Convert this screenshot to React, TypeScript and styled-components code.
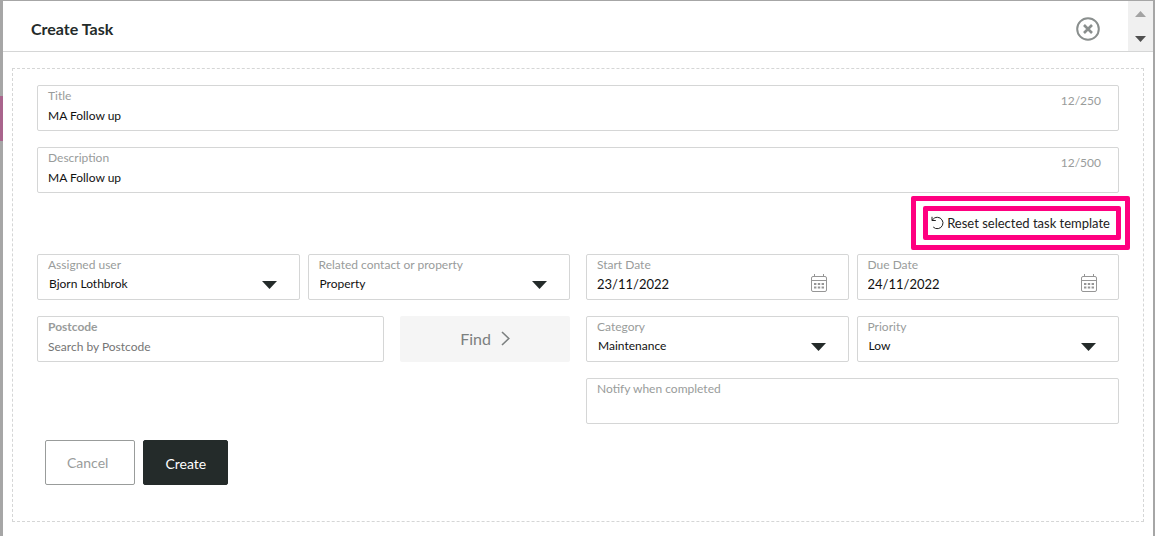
import React from "react";
import styled, { createGlobalStyle, css } from "styled-components";

const ink = "#242b2a";
const muted = "#999c9b";
const line = "#d5d6d6";
const pink = "#ff0080";

const GlobalStyle = createGlobalStyle`
  *, *::before, *::after { box-sizing: border-box; }
  body { margin: 0; background: #a6a6a6; }
  body, button, input, select { font-family: Lato, "Liberation Sans", sans-serif; }
`;

const Backdrop = styled.div`
  display: flex;
  min-height: 100vh;
  padding-top: 1px;
`;

const Rail = styled.div<{ $width: number }>`
  flex: 0 0 ${(p) => p.$width}px;
  padding-top: 95px;
`;

const RailMarker = styled.div`
  height: 45px;
  background: #a9648c;
`;

const Dialog = styled.section`
  flex: 1;
  min-width: 0;
  background: #fff;
`;

const Header = styled.header`
  display: flex;
  align-items: center;
  height: 51px;
  padding-left: 28px;
  border-bottom: 1px solid ${line};
`;

const Heading = styled.h1`
  flex: 1;
  margin: 0;
  padding-top: 6px;
  font-size: 16px;
  line-height: 20px;
  font-weight: 700;
  color: ${ink};
`;

const CloseButton = styled.button`
  width: 24px;
  height: 24px;
  margin: 6px 28px 0 0;
  padding: 0;
  border: 0;
  background: none;
  svg { display: block; }
`;

const Scroller = styled.div`
  display: flex;
  flex-direction: column;
  align-self: stretch;
  width: 25px;
  background: #f0f0f0;
`;

const ScrollButton = styled.button`
  flex: 1;
  display: flex;
  align-items: center;
  justify-content: center;
  padding: 0;
  border: 0;
  background: none;
`;

const Form = styled.form`
  display: flex;
  flex-direction: column;
  margin: 16px 9px 14px;
  padding: 16px 24px 36px;
  border: 1px dashed ${line};
`;

const Stack = styled.div`
  display: flex;
  flex-direction: column;
  gap: 16px;
`;

const Halves = styled.div`
  display: grid;
  grid-template-columns: repeat(2, minmax(0, 1fr));
  align-items: start;
  gap: 16px;
`;

const Pair = styled.div`
  display: grid;
  grid-template-columns: repeat(2, minmax(0, 1fr));
  gap: 8px;
`;

const SearchRow = styled.div`
  display: grid;
  grid-template-columns: minmax(0, 1fr) 170px;
  gap: 16px;
`;

const FieldBox = styled.div`
  position: relative;
  display: flex;
  flex-direction: column;
  height: 46px;
  padding: 2px 10px 0;
  border: 1px solid ${line};
  border-radius: 2px;
`;

const Label = styled.label<{ $bold?: boolean }>`
  font-size: 12px;
  line-height: 16px;
  font-weight: ${(p) => (p.$bold ? 700 : 400)};
  color: ${muted};
`;

const control = css`
  display: block;
  width: 100%;
  margin: 0;
  border: 0;
  outline: 0;
  background: none;
  color: #111;
  appearance: none;
`;

const Input = styled.input<{ $large?: boolean }>`
  ${control}
  height: 22px;
  padding: 0;
  font-size: ${(p) => (p.$large ? 13 : 12)}px;
  &::placeholder { color: #757575; opacity: 1; }
`;

const Select = styled.select`
  ${control}
  height: 20px;
  padding: 0 0 0 1px;
  font-size: 12px;
`;

const Count = styled.span`
  position: absolute;
  top: 7px;
  right: 17px;
  font-size: 12px;
  line-height: 16px;
  color: ${muted};
`;

const Caret = styled.svg`
  position: absolute;
  top: 26px;
  right: 22px;
  pointer-events: none;
`;

const CalendarButton = styled.button`
  position: absolute;
  top: 19px;
  right: 21px;
  padding: 0;
  border: 0;
  background: none;
  svg { display: block; }
`;

const ResetRow = styled.div`
  display: flex;
  align-items: center;
  justify-content: flex-end;
  height: 61px;
  padding: 0 9px 2px 0;
`;

const ResetButton = styled.button`
  position: relative;
  display: flex;
  align-items: center;
  gap: 3px;
  height: 20px;
  padding: 0;
  border: 0;
  background: none;
  font-size: 13px;
  line-height: 20px;
  color: #222;
  &::before, &::after {
    content: "";
    position: absolute;
    border: 5px solid ${pink};
    border-radius: 2px;
    pointer-events: none;
  }
  &::before { inset: -7px -11px -7px -8px; }
  &::after { inset: -17px -20px; }
`;

const FindButton = styled.button`
  display: flex;
  align-items: center;
  justify-content: center;
  gap: 10px;
  height: 46px;
  padding: 0 0 2px;
  border: 0;
  border-radius: 2px;
  background: #f5f5f5;
  font-size: 16px;
  color: #7c8080;
`;

const Actions = styled.div`
  display: flex;
  gap: 8px;
  margin: 16px 8px 0;
`;

const ActionButton = styled.button<{ $primary?: boolean }>`
  height: 45px;
  padding: ${(p) => (p.$primary ? "2px 21px 0" : "0 26px 0 21px")};
  border: 1px solid ${(p) => (p.$primary ? ink : "#999c9b")};
  border-radius: 2px;
  background: ${(p) => (p.$primary ? ink : "#fff")};
  font-size: 14px;
  color: ${(p) => (p.$primary ? "#fff" : muted)};
`;

type FieldProps = { id: string; label: string; value?: string };

function CountedField({ id, label, value, count }: FieldProps & { count: string }) {
  return (
    <FieldBox>
      <Label htmlFor={id}>{label}</Label>
      <Input id={id} defaultValue={value} />
      <Count>{count}</Count>
    </FieldBox>
  );
}

function SelectField({ id, label, value }: FieldProps) {
  return (
    <FieldBox>
      <Label htmlFor={id}>{label}</Label>
      <Select id={id} defaultValue={value}>
        <option>{value}</option>
      </Select>
      <Caret width="15" height="8" viewBox="0 0 15 8" aria-hidden="true">
        <path d="M0 0H15L7.5 8Z" fill={ink} />
      </Caret>
    </FieldBox>
  );
}

function DateField({ id, label, value }: FieldProps) {
  return (
    <FieldBox>
      <Label htmlFor={id}>{label}</Label>
      <Input id={id} defaultValue={value} $large />
      <CalendarButton type="button" aria-label={`Choose ${label}`}>
        <svg width="16" height="18" viewBox="0 0 16 18" fill="none" stroke="#969696">
          <rect x="0.5" y="2.5" width="15" height="15" rx="1.5" />
          <path d="M0.5 6.5H15.5M3.5 0V2.5M12.5 0V2.5" />
          <path d="M3 10H13M3 13.5H13" strokeWidth="2" strokeDasharray="2.4 1.4" />
        </svg>
      </CalendarButton>
    </FieldBox>
  );
}

export default function App() {
  return (
    <>
      <GlobalStyle />
      <Backdrop>
        <Rail $width={3}>
          <RailMarker />
        </Rail>
        <Dialog role="dialog" aria-labelledby="dialog-title">
          <Header>
            <Heading id="dialog-title">Create Task</Heading>
            <CloseButton type="button" aria-label="Close">
              <svg width="24" height="24" viewBox="0 0 24 24" fill="none" stroke="#8a8f8e">
                <circle cx="12" cy="12" r="10.8" strokeWidth="2" />
                <path d="M8 8L16 16M16 8L8 16" strokeWidth="2.6" />
              </svg>
            </CloseButton>
            <Scroller>
              <ScrollButton type="button" aria-label="Scroll up">
                <svg width="11" height="6" viewBox="0 0 11 6">
                  <path d="M0 6H11L5.5 0Z" fill="#a3a3a3" />
                </svg>
              </ScrollButton>
              <ScrollButton type="button" aria-label="Scroll down">
                <svg width="11" height="6" viewBox="0 0 11 6">
                  <path d="M0 0H11L5.5 6Z" fill="#505050" />
                </svg>
              </ScrollButton>
            </Scroller>
          </Header>
          <Form>
            <Stack>
              <CountedField id="title" label="Title" value="MA Follow up" count="12/250" />
              <CountedField id="description" label="Description" value="MA Follow up" count="12/500" />
            </Stack>
            <ResetRow>
              <ResetButton type="button">
                <svg width="13" height="14" viewBox="0 0 13 14" fill="none" stroke="#222">
                  <path d="M1 0.8V4.5H4.8M1.2 4.3C2.6 2 4.4 1.3 6.4 1.3A5.7 5.7 0 1 1 2.2 11" />
                </svg>
                Reset selected task template
              </ResetButton>
            </ResetRow>
            <Halves>
              <Stack>
                <Pair>
                  <SelectField id="user" label="Assigned user" value="Bjorn Lothbrok" />
                  <SelectField id="related" label="Related contact or property" value="Property" />
                </Pair>
                <SearchRow>
                  <FieldBox>
                    <Label htmlFor="postcode" $bold>Postcode</Label>
                    <Input id="postcode" placeholder="Search by Postcode" />
                  </FieldBox>
                  <FindButton type="button">
                    Find
                    <svg width="9" height="15" viewBox="0 0 9 15" fill="none" stroke="#7c8080" strokeWidth="1.6">
                      <path d="M1 1L7.8 7.5L1 14" />
                    </svg>
                  </FindButton>
                </SearchRow>
              </Stack>
              <Stack>
                <Pair>
                  <DateField id="start" label="Start Date" value="23/11/2022" />
                  <DateField id="due" label="Due Date" value="24/11/2022" />
                </Pair>
                <Pair>
                  <SelectField id="category" label="Category" value="Maintenance" />
                  <SelectField id="priority" label="Priority" value="Low" />
                </Pair>
                <FieldBox>
                  <Label htmlFor="notify">Notify when completed</Label>
                  <Input id="notify" />
                </FieldBox>
              </Stack>
            </Halves>
            <Actions>
              <ActionButton type="button">Cancel</ActionButton>
              <ActionButton type="submit" $primary>Create</ActionButton>
            </Actions>
          </Form>
        </Dialog>
        <Rail $width={2} />
      </Backdrop>
    </>
  );
}
